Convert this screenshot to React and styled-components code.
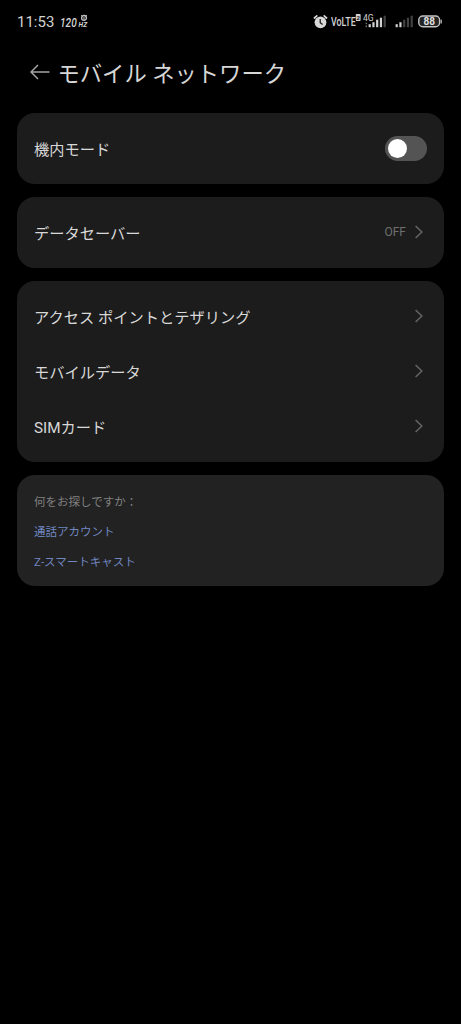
import React from "react";
import styled, { createGlobalStyle } from "styled-components";

const GlobalStyle = createGlobalStyle`
  * {
    box-sizing: border-box;
  }

  body {
    margin: 0;
    background-color: #000000;
    font-family: Roboto, "Noto Sans CJK JP", sans-serif;
  }
`;

const Screen = styled.div`
  width: 100%;
  height: 1024px;
  background-color: #000000;
  display: flex;
  flex-direction: column;
  overflow: hidden;
`;

const StatusBar = styled.div`
  height: 43px;
  padding-left: 17px;
  padding-right: 19px;
  display: flex;
  align-items: center;
  justify-content: space-between;
  color: #d2d2d2;
`;

const StatusGroup = styled.div`
  display: flex;
  align-items: center;
`;

const Clock = styled.div`
  font-size: 15px;
  line-height: 18px;
  width: 43px;
  white-space: nowrap;
`;

const StatusIcon = styled.svg`
  display: block;
  flex: none;
  margin-left: ${(props) => props.$gap || 0}px;
`;

const Header = styled.div`
  height: 61px;
  padding-left: 30px;
  display: flex;
  align-items: center;
`;

const BackArrow = styled.svg`
  display: block;
  margin-top: -3px;
`;

const Title = styled.h1`
  margin: 0 0 0 7.5px;
  color: #d6d6d6;
  font-size: 22.3px;
  font-weight: 400;
  line-height: 30px;
  white-space: nowrap;
`;

const Cards = styled.div`
  margin-top: 8.5px;
  padding: 0 17px;
  display: flex;
  flex-direction: column;
  gap: 13px;
`;

const Card = styled.div`
  background-color: #1c1c1c;
  border-radius: 18px;
  padding: 8px 17px;
`;

const Row = styled.div`
  height: 55px;
  display: flex;
  align-items: center;
  justify-content: space-between;
`;

const Label = styled.div`
  padding-top: 3px;
  color: #d8d8d8;
  font-size: 15.25px;
  line-height: 22px;
  white-space: nowrap;
`;

const RowEnd = styled.div`
  display: flex;
  align-items: center;
  gap: 8px;
  margin-right: 3px;
`;

const Value = styled.div`
  color: #6f6f6f;
  font-size: 12px;
  line-height: 16px;
`;

const Switch = styled.div`
  width: 42px;
  height: 25px;
  border-radius: 13px;
  background-color: #545454;
  padding: 0 3px;
  display: flex;
  align-items: center;
`;

const Knob = styled.div`
  width: 19px;
  height: 19px;
  border-radius: 50%;
  background-color: #ffffff;
`;

const HintCard = styled.div`
  background-color: #222222;
  border-radius: 18px;
  height: 111px;
  padding: 11px 17px;
`;

const Hint = styled.div`
  height: 30px;
  display: flex;
  align-items: center;
  color: ${(props) => (props.$link ? "#7086c0" : "#808080")};
  font-size: 11.5px;
  white-space: nowrap;
`;

const Chevron = () => (
  <svg width="10" height="16" viewBox="0 0 10 16" fill="none">
    <path d="M1.6 2L7.8 8L1.6 14" stroke="#626262" strokeWidth="1.6" />
  </svg>
);

const RefreshRate = () => (
  <StatusIcon width="29" height="18" viewBox="0 0 29 18" fill="#d2d2d2">
    <text
      transform="translate(0 14.2) scale(0.78 1)"
      fontSize="13"
      fontWeight="500"
      fontStyle="italic"
    >
      120
    </text>
    <text
      transform="translate(18.6 14.2) scale(0.95 1)"
      fontSize="7"
      fontWeight="700"
      fontStyle="italic"
    >
      HZ
    </text>
    <circle cx="24" cy="4.9" r="2.4" fill="none" stroke="#c4c4c4" strokeWidth="1.3" />
    <path d="M21.2 2.2L22.4 3.4M26.8 2.2L25.6 3.4M24 4V7" stroke="#c4c4c4" />
  </StatusIcon>
);

const Alarm = () => (
  <StatusIcon width="15" height="16" viewBox="0 0 15 16">
    <circle cx="7.5" cy="8.3" r="5.9" fill="#d8d8d8" />
    <path
      d="M1.4 4L3.8 1.9M13.6 4L11.2 1.9"
      stroke="#d8d8d8"
      strokeWidth="1.7"
      strokeLinecap="round"
    />
    <path d="M7.2 5V8.7L9.6 10.5" fill="none" stroke="#111111" strokeWidth="1.2" />
  </StatusIcon>
);

const VoLte = () => (
  <StatusIcon $gap={3} width="30" height="18" viewBox="0 0 30 18" fill="#d2d2d2">
    <text
      transform="translate(0 13.2) scale(0.71 1)"
      fontSize="12.5"
      fontWeight="500"
    >
      VoLTE
    </text>
    <rect x="24.8" y="1" width="4.8" height="7" rx="0.8" />
    <text
      transform="translate(25.5 6.7)"
      fontSize="6"
      fontWeight="700"
      fill="#111111"
    >
      2
    </text>
  </StatusIcon>
);

const bars = [3, 5, 7.5, 9.5, 11.5];

const Signal = ({ level, network, gap }) => (
  <StatusIcon $gap={gap} width="26" height="18" viewBox="0 0 26 18">
    {network && (
      <>
        <text x="0" y="8" fontSize="8.6" fill="#d2d2d2">
          {network}
        </text>
        <rect x="2.6" y="9.8" width="1.4" height="1.4" fill="#777777" />
        <rect x="2.6" y="12.6" width="1.4" height="1.6" fill="#777777" />
      </>
    )}
    {bars.map((height, i) => (
      <rect
        key={height}
        x={5.6 + i * 3.75}
        y={14.2 - height}
        width="2.2"
        height={height}
        fill={i < level ? "#d2d2d2" : "#424242"}
      />
    ))}
  </StatusIcon>
);

const Battery = ({ percent }) => (
  <StatusIcon $gap={2.5} width="24" height="14" viewBox="0 0 24 14">
    <rect
      x="0.8"
      y="1"
      width="20.8"
      height="10.8"
      rx="4"
      fill="#242424"
      stroke="#c4c4c4"
      strokeWidth="1.4"
    />
    <rect x="22.6" y="4.6" width="1.2" height="4" rx="0.5" fill="#c4c4c4" />
    <text
      x="11.2"
      y="9.9"
      fontSize="10"
      fontWeight="700"
      fill="#e0e0e0"
      textAnchor="middle"
    >
      {percent}
    </text>
  </StatusIcon>
);

const networkItems = [
  "アクセス ポイントとテザリング",
  "モバイルデータ",
  "SIMカード",
];

const App = () => {
  return (
    <>
      <GlobalStyle />
      <Screen>
        <StatusBar>
          <StatusGroup>
            <Clock>11:53</Clock>
            <RefreshRate />
          </StatusGroup>
          <StatusGroup>
            <Alarm />
            <VoLte />
            <Signal level={4} network="4G" gap={2} />
            <Signal level={2} gap={1} />
            <Battery percent={88} />
          </StatusGroup>
        </StatusBar>
        <Header>
          <BackArrow width="20" height="16" viewBox="0 0 20 16" fill="none">
            <path d="M8 1L1 8L8 15M1 8H19.5" stroke="#a4a4a4" strokeWidth="1.5" />
          </BackArrow>
          <Title>モバイル ネットワーク</Title>
        </Header>
        <Cards>
          <Card>
            <Row>
              <Label>機内モード</Label>
              <Switch>
                <Knob />
              </Switch>
            </Row>
          </Card>
          <Card>
            <Row>
              <Label>データセーバー</Label>
              <RowEnd>
                <Value>OFF</Value>
                <Chevron />
              </RowEnd>
            </Row>
          </Card>
          <Card>
            {networkItems.map((item) => (
              <Row key={item}>
                <Label>{item}</Label>
                <RowEnd>
                  <Chevron />
                </RowEnd>
              </Row>
            ))}
          </Card>
          <HintCard>
            <Hint>何をお探しですか：</Hint>
            <Hint $link>通話アカウント</Hint>
            <Hint $link>Z-スマートキャスト</Hint>
          </HintCard>
        </Cards>
      </Screen>
    </>
  );
};

export default App;
